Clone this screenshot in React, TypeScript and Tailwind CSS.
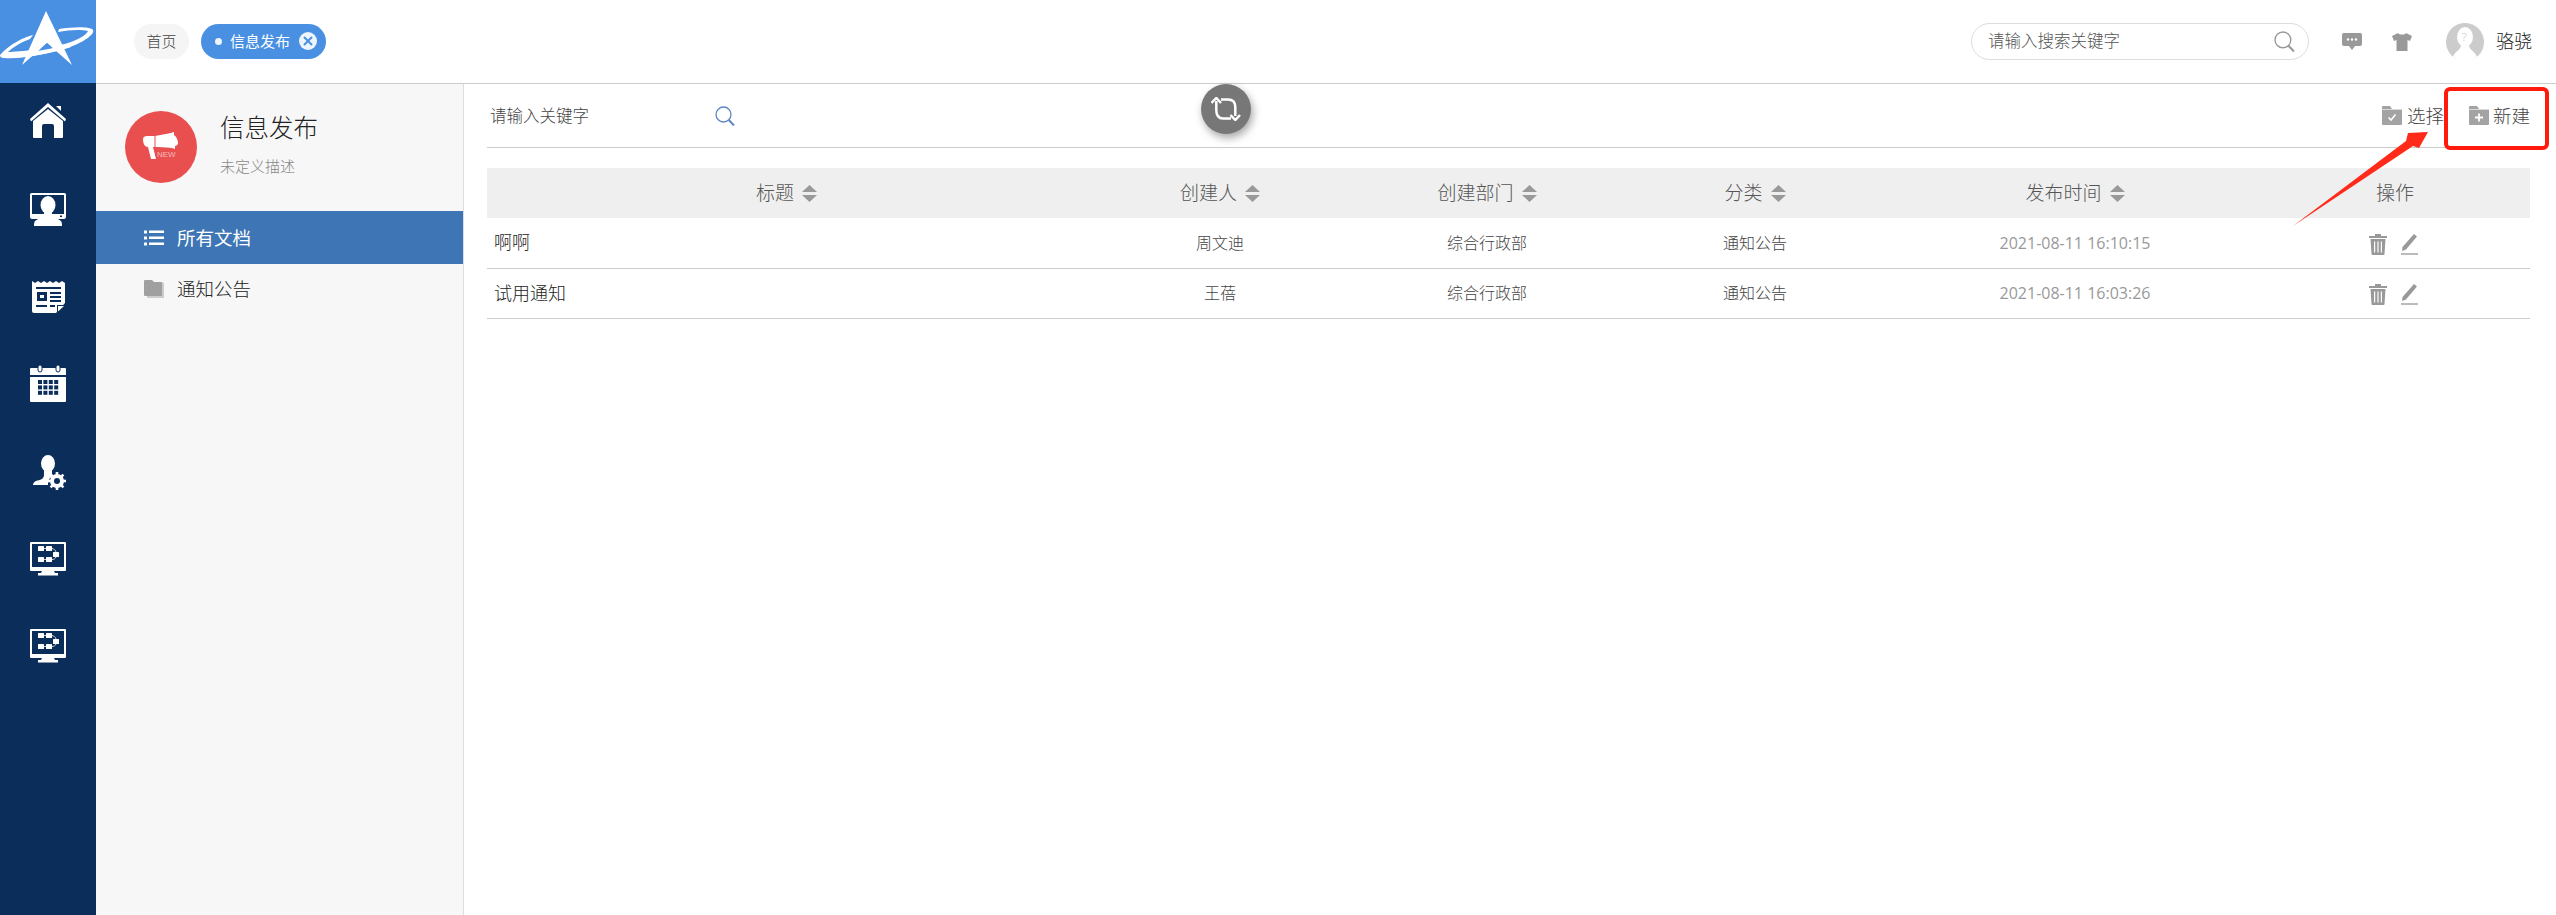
import React from "react";

const FLOW_NODES = [
  [8, 4],
  [16, 4],
  [8, 15],
  [16, 15],
  [23, 10],
];

function LogoMark() {
  return (
    <svg width="96" height="83" viewBox="0 0 96 83">
      <path d="M0 55C10 44 24 37 33 35L30 39C22 42 13 47 8 52C20 52 50 48 68 43C80 39 86 35 88 31C80 29 68 30 58 32L59 29C72 27 90 26 93 30C95 34 84 42 70 47C50 53 20 60 4 58C1 58 0 57 0 55Z" fill="#fff" />
      <path d="M46 11L72 65L47 43L22 65Z" fill="#fff" />
      <path d="M47 43L55 50L36 53Z" fill="#4a90e2" />
      <path d="M9 54C20 54 50 50 69 44L71 47C50 54 20 59 5 57Z" fill="#fff" />
    </svg>
  );
}

function HomeIcon() {
  return (
    <svg width="36" height="36" viewBox="0 0 36 36" fill="#fff">
      <path d="M18 0L36 16L35 18.5L18 4L1 18.5L0 16Z" />
      <path d="M18 6L33 18V34a1 1 0 0 1-1 1H24V23a2 2 0 0 0-2-2H14a2 2 0 0 0-2 2V35H4a1 1 0 0 1-1-1V18Z" />
      <path d="M26 3H31V8Z" />
    </svg>
  );
}

function MonitorPersonIcon() {
  return (
    <svg width="36" height="33" viewBox="0 0 36 33" fill="#fff">
      <path fillRule="evenodd" d="M1.5 0H34.5A1.5 1.5 0 0 1 36 1.500V24a2 2 0 0 1-2 2H2a2 2 0 0 1-2-2V1.500A1.500 1.500 0 0 1 1.500 0ZM2 2V21H34V2Z" />
      <ellipse cx="18" cy="12" rx="7.500" ry="9" />
      <path d="M14 18H22V22C25 25 29 26 31 28C32 30 32 31 32 33H4C4 31 4 30 5 28C7 26 11 25 14 22Z" />
      <rect x="30" y="22.500" width="2" height="1.500" fill="#0a2d5a" />
    </svg>
  );
}

function NewsIcon() {
  return (
    <svg width="33" height="33" viewBox="0 0 33 33">
      <path d="M0 1L3 3L6 1L9 3L12 1L15 3L18 1L21 3L24 1L27 3L30 1L33 3V23L24 33H2a2 2 0 0 1-2-2Z" fill="#fff" />
      <path d="M25 33V25H33Z" fill="#0a2d5a" />
      <path d="M26 31.500V26H32Z" fill="#fff" />
      <rect x="4" y="7" width="25" height="2" fill="#0a2d5a" />
      <rect x="5" y="12" width="10" height="9" fill="#0a2d5a" />
      <rect x="8" y="15" width="4" height="3" fill="#fff" />
      <rect x="18" y="12" width="11" height="2" fill="#0a2d5a" />
      <rect x="18" y="16" width="11" height="2" fill="#0a2d5a" />
      <rect x="18" y="20" width="11" height="2" fill="#0a2d5a" />
      <rect x="4" y="25" width="11" height="2" fill="#0a2d5a" />
      <rect x="18" y="25" width="5" height="2" fill="#0a2d5a" />
    </svg>
  );
}

function CalendarIcon() {
  const cells = [];
  for (let r = 0; r < 3; r++) {
    for (let c = 0; c < 4; c++) {
      cells.push(<rect key={`${r}-${c}`} x={8 + c * 5.4} y={15 + r * 5.4} width="4" height="4" fill="#0a2d5a" />);
    }
  }
  return (
    <svg width="36" height="37" viewBox="0 0 36 37">
      <path d="M1 3H35a1 1 0 0 1 1 1V10H0V4a1 1 0 0 1 1-1Z" fill="#fff" />
      <path d="M0 12H36V36a1 1 0 0 1-1 1H1a1 1 0 0 1-1-1Z" fill="#fff" />
      <rect x="8" y="0" width="4" height="7" rx="2" fill="#fff" stroke="#0a2d5a" strokeWidth="1" />
      <rect x="26" y="0" width="4" height="7" rx="2" fill="#fff" stroke="#0a2d5a" strokeWidth="1" />
      {cells}
    </svg>
  );
}

function PersonGearIcon() {
  return (
    <svg width="33" height="35" viewBox="0 0 33 35" fill="#fff">
      <ellipse cx="15" cy="8.500" rx="7" ry="8.500" />
      <path d="M11 14H19V19C20 20 20 21 19 22C16 23 15 26 15 30H0C0 28 1 27 3 26C7 25 11 24 11 20Z" />
      <circle cx="24" cy="26" r="7" />
      <g stroke="#fff" strokeWidth="2.600">
        <path d="M24 17V35" />
        <path d="M15 26H33" />
        <path d="M17.600 19.600L30.400 32.400" />
        <path d="M30.400 19.600L17.600 32.400" />
      </g>
      <circle cx="24" cy="26" r="3" fill="#0a2d5a" />
    </svg>
  );
}

function FlowMonitorIcon() {
  return (
    <svg width="36" height="35" viewBox="0 0 36 35" fill="#fff">
      <path fillRule="evenodd" d="M1 0H35a1 1 0 0 1 1 1V28a1 1 0 0 1-1 1H1a1 1 0 0 1-1-1V1a1 1 0 0 1 1-1ZM2 2V25H34V2Z" />
      {FLOW_NODES.map(([x, y]) => (
        <rect key={`${x}-${y}`} x={x} y={y} width="6" height="5" rx="0.500" />
      ))}
      <path d="M14 6.500H16M14 17.500H16M22 6.500C24 7 25.500 8 26 10M22 17.500C24 17.500 25.500 16.500 26 15" stroke="#fff" strokeWidth="0.800" fill="none" />
      <path d="M12 29H24L25 31H28V33.500H8V31H11Z" />
    </svg>
  );
}

function SortIcon() {
  return (
    <svg width="15" height="17" viewBox="0 0 15 17" fill="#999" className="shrink-0">
      <path d="M7.500 0L15 7H0Z" />
      <path d="M0 10H15L7.500 17Z" />
    </svg>
  );
}

function MegaphoneBadge() {
  return (
    <div className="flex h-[72px] w-[72px] shrink-0 items-center justify-center rounded-full bg-[#e94f4f]">
      <svg width="72" height="72" viewBox="0 0 72 72">
        <path d="M18 28C18 26 20 25 22 25H30L46 22L49 21V24C52 26 53 30 53 32C53 34 51 35 50 35V38L47 37C40 36 34 36 28 36L31 48H26L23 36C20 36 18 33 18 28Z" fill="#fff" />
        <rect x="29" y="25" width="2" height="11" fill="#e94f4f" opacity="0.500" />
        <text x="32" y="46" fontSize="8" fontFamily="Liberation Sans, sans-serif" fill="#f6bcbc">NEW</text>
      </svg>
    </div>
  );
}

function FolderIcon({ kind }: { kind: "check" | "plus" }) {
  return (
    <svg width="20" height="19" viewBox="0 0 20 19" className="shrink-0">
      <path d="M1 0H8L10 3H19a1 1 0 0 1 1 1V18a1 1 0 0 1-1 1H1a1 1 0 0 1-1-1V1a1 1 0 0 1 1-1Z" fill="#a3a3a3" />
      <rect x="0" y="3" width="20" height="1" fill="#d8d8d8" />
      {kind === "check" && <path d="M6.500 11.500L9 14L13.500 8.500" fill="none" stroke="#fff" strokeWidth="1.600" />}
      {kind === "plus" && <path d="M10 7.500V15.500M6 11.500H14" fill="none" stroke="#fff" strokeWidth="1.800" />}
    </svg>
  );
}

function SearchGlass({ color, size }: { color: string; size: number }) {
  return (
    <svg width={size} height={size} viewBox="0 0 20 20" fill="none" stroke={color} strokeWidth="1.300" className="shrink-0">
      <circle cx="8.500" cy="8.500" r="7.500" />
      <path d="M13.800 14L19 19.500" strokeWidth="2" />
    </svg>
  );
}

function TrashIcon() {
  return (
    <svg width="18" height="21" viewBox="0 0 18 21" fill="#999">
      <path d="M6 0H12V2H18V4H0V2H6Z" />
      <path fillRule="evenodd" d="M1.500 5H16.500L15.500 20a1 1 0 0 1-1 1H3.500a1 1 0 0 1-1-1ZM5 7.500V18.500H6.200V7.500ZM8.400 7.500V18.500H9.600V7.500ZM11.800 7.500V18.500H13V7.500Z" />
    </svg>
  );
}

function PencilIcon() {
  return (
    <svg width="17" height="21" viewBox="0 0 17 21" fill="#999">
      <path d="M13 0L16 2.500L5 15.500L1 17L1.500 13Z" />
      <rect x="0" y="19" width="17" height="2" fill="#bbb" />
    </svg>
  );
}

function ListIcon() {
  return (
    <svg width="20" height="16" viewBox="0 0 20 16" fill="#fff">
      <rect x="0" y="0.500" width="3" height="3" />
      <rect x="5" y="0.500" width="15" height="2.500" />
      <rect x="0" y="6.500" width="3" height="3" />
      <rect x="5" y="6.500" width="15" height="2.500" />
      <rect x="0" y="12.500" width="3" height="3" />
      <rect x="5" y="12.500" width="15" height="2.500" />
    </svg>
  );
}

const columns = [
  { label: "标题", sort: true },
  { label: "创建人", sort: true },
  { label: "创建部门", sort: true },
  { label: "分类", sort: true },
  { label: "发布时间", sort: true },
  { label: "操作", sort: false },
];

const rows = [
  { title: "啊啊", author: "周文迪", dept: "综合行政部", type: "通知公告", time: "2021-08-11 16:10:15" },
  { title: "试用通知", author: "王蓓", dept: "综合行政部", type: "通知公告", time: "2021-08-11 16:03:26" },
];

export default function App() {
  return (
    <div className="relative flex min-h-screen w-full overflow-hidden bg-white font-light font-['Open_Sans','Noto_Sans_CJK_SC',sans-serif]">
      {/* left rail */}
      <aside className="flex w-[96px] shrink-0 flex-col bg-[#0a2d5a]">
        <div className="h-[83px] bg-[#4a90e2]">
          <LogoMark />
        </div>
        <nav className="flex flex-col items-center">
          <div className="mt-[20px] flex h-[36px] items-center"><HomeIcon /></div>
          <div className="mt-[54px] flex h-[33px] items-center"><MonitorPersonIcon /></div>
          <div className="mt-[54px] flex h-[33px] items-center pl-[1px]"><NewsIcon /></div>
          <div className="mt-[52px] flex h-[37px] items-center"><CalendarIcon /></div>
          <div className="mt-[53px] flex h-[35px] items-center pl-[3px]"><PersonGearIcon /></div>
          <div className="mt-[52px] flex h-[35px] items-center"><FlowMonitorIcon /></div>
          <div className="mt-[52px] flex h-[35px] items-center"><FlowMonitorIcon /></div>
        </nav>
      </aside>

      <div className="flex min-w-0 flex-1 flex-col">
        {/* top bar */}
        <header className="flex h-[84px] items-center justify-between border-b border-[#ccc] pl-[38px] pr-[24px]">
          <div className="flex items-center gap-[12px] pb-[1px]">
            <span className="flex h-[35px] w-[55px] items-center justify-center rounded-full bg-[#f5f5f5] text-[15px] text-[#444]">首页</span>
            <span className="flex h-[35px] w-[125px] items-center rounded-full bg-[#4a90e2] pl-[14px] text-[15px] font-normal text-white">
              <span className="h-[7px] w-[7px] rounded-full bg-white/90" />
              <span className="ml-[8px]">信息发布</span>
              <span className="ml-[9px] flex h-[18px] w-[18px] items-center justify-center rounded-full bg-white/90">
                <svg width="10" height="10" viewBox="0 0 10 10" stroke="#4a90e2" strokeWidth="2">
                  <path d="M1 1L9 9M9 1L1 9" />
                </svg>
              </span>
            </span>
          </div>
          <div className="flex items-center">
            <div className="flex h-[37px] w-[338px] items-center justify-between rounded-full border border-[#ddd] pl-[16px] pr-[13px] text-[16.500px] text-[#555]">
              <span>请输入搜索关键字</span>
              <SearchGlass color="#999" size={21} />
            </div>
            <svg width="20" height="17" viewBox="0 0 20 17" fill="#999" className="ml-[33px]">
              <path d="M2 0H18a2 2 0 0 1 2 2V11a2 2 0 0 1-2 2H13L10 17L7 13H2a2 2 0 0 1-2-2V2a2 2 0 0 1 2-2Z" />
              <circle cx="6" cy="6.500" r="1.200" fill="#fff" />
              <circle cx="10" cy="6.500" r="1.200" fill="#fff" />
              <circle cx="14" cy="6.500" r="1.200" fill="#fff" />
            </svg>
            <svg width="20" height="18" viewBox="0 0 20 18" fill="#999" className="ml-[30px]">
              <path d="M6 0C7 2 13 2 14 0L20 3L18 8L15.500 7V18H4.500V7L2 8L0 3Z" />
            </svg>
            <svg width="38" height="38" viewBox="0 0 38 38" className="ml-[34px]">
              <circle cx="19" cy="19" r="19" fill="#ccc" />
              <ellipse cx="19" cy="14" rx="8" ry="10" fill="#fff" />
              <path d="M15 22H23C23 27 30 29 31 34A19 19 0 0 1 7 34C8 29 15 27 15 22Z" fill="#fff" />
              <text x="16" y="18" fontSize="11" fill="#bbb">?</text>
            </svg>
            <span className="ml-[12px] text-[18px] text-[#222]">骆骁</span>
          </div>
        </header>

        <div className="flex flex-1">
          {/* section menu */}
          <section className="w-[368px] shrink-0 border-r border-[#ddd] bg-[#f7f7f7]">
            <div className="flex h-[127px] items-start pl-[29px] pt-[27px]">
              <MegaphoneBadge />
              <div className="ml-[23px]">
                <div className="text-[24.500px] leading-[34px] text-[#222]">信息发布</div>
                <div className="mt-[11px] text-[15px] leading-[20px] text-[#888]">未定义描述</div>
              </div>
            </div>
            <div className="flex h-[53px] items-center bg-[#3d75b5] pl-[48px] text-[18.500px] font-normal text-white">
              <ListIcon />
              <span className="ml-[13px]">所有文档</span>
            </div>
            <div className="flex h-[50px] items-center pl-[48px] text-[18.500px] text-[#222]">
              <svg width="20" height="18" viewBox="0 0 20 18" className="shrink-0">
                <path d="M3 2H18a2 2 0 0 1 2 2V18H3Z" fill="#ccc" />
                <path d="M1 0H8L10 2H17a1 1 0 0 1 1 1V16H1a1 1 0 0 1-1-1V1a1 1 0 0 1 1-1Z" fill="#a0a0a0" />
              </svg>
              <span className="ml-[13px]">通知公告</span>
            </div>
          </section>

          {/* document list */}
          <main className="min-w-0 flex-1 pl-[23px] pr-[26px]">
            <div className="flex h-[64px] items-center justify-between border-b border-[#ccc] pl-[3px]">
              <div className="flex items-center pt-[1px]">
                <span className="w-[225px] text-[16.500px] text-[#444]">请输入关键字</span>
                <SearchGlass color="#5d86c4" size={20} />
              </div>
              <div className="flex items-center text-[18.500px] text-[#444]">
                <FolderIcon kind="check" />
                <span className="ml-[5px]">选择</span>
                <span className="ml-[25px]"><FolderIcon kind="plus" /></span>
                <span className="ml-[4px]">新建</span>
              </div>
            </div>
            <table className="mt-[20px] w-full table-fixed border-collapse">
              <colgroup>
                <col className="w-[599px]" />
                <col className="w-[268px]" />
                <col className="w-[266px]" />
                <col className="w-[270px]" />
                <col className="w-[370px]" />
                <col className="w-[270px]" />
              </colgroup>
              <thead>
                <tr className="h-[50px] bg-[#efefef] text-[19px] text-[#555]">
                  {columns.map((col) => (
                    <th key={col.label} className="p-0 font-light">
                      <span className="inline-flex items-center gap-[8px]">
                        {col.label}
                        {col.sort && <SortIcon />}
                      </span>
                    </th>
                  ))}
                </tr>
              </thead>
              <tbody>
                {rows.map((row) => (
                  <tr key={row.title} className="h-[50px] border-b border-[#ccc] text-center text-[16px] text-[#444]">
                    <td className="p-0 pl-[7px] text-left text-[18px] text-[#222]">{row.title}</td>
                    <td className="p-0">{row.author}</td>
                    <td className="p-0">{row.dept}</td>
                    <td className="p-0">{row.type}</td>
                    <td className="p-0 font-normal text-[#999]">{row.time}</td>
                    <td className="p-0">
                      <span className="inline-flex items-center gap-[14px] pr-[4px] align-middle">
                        <TrashIcon />
                        <PencilIcon />
                      </span>
                    </td>
                  </tr>
                ))}
              </tbody>
            </table>
          </main>
        </div>
      </div>

      {/* floating refresh */}
      <div className="absolute left-[1201px] top-[84px] flex h-[50px] w-[50px] items-center justify-center rounded-full bg-[#777] shadow-[2px_4px_8px_rgba(0,0,0,0.35)]">
        <svg width="31" height="24" viewBox="0 0 31 24" fill="none" stroke="#fff" strokeWidth="2.500">
          <path d="M5.300 4V13Q5.300 21.500 12 21.500H20" />
          <path d="M24.300 19V10Q24.300 2.500 17 2.500H10" />
          <path d="M0.500 6L5.300 1L10 6" />
          <path d="M19.500 18L24.300 23L29 18" />
        </svg>
      </div>

      {/* screenshot annotation */}
      <div className="absolute left-[2444px] top-[87px] h-[63px] w-[105px] rounded-[6px] border-4 border-[#ff1a0e]" />
      <svg width="150" height="105" viewBox="0 0 150 105" className="absolute left-[2285px] top-[125px]">
        <path d="M8 101L121 16L123 8L143 7L134 23L128 21Z" fill="#ff2a1a" />
      </svg>
    </div>
  );
}
